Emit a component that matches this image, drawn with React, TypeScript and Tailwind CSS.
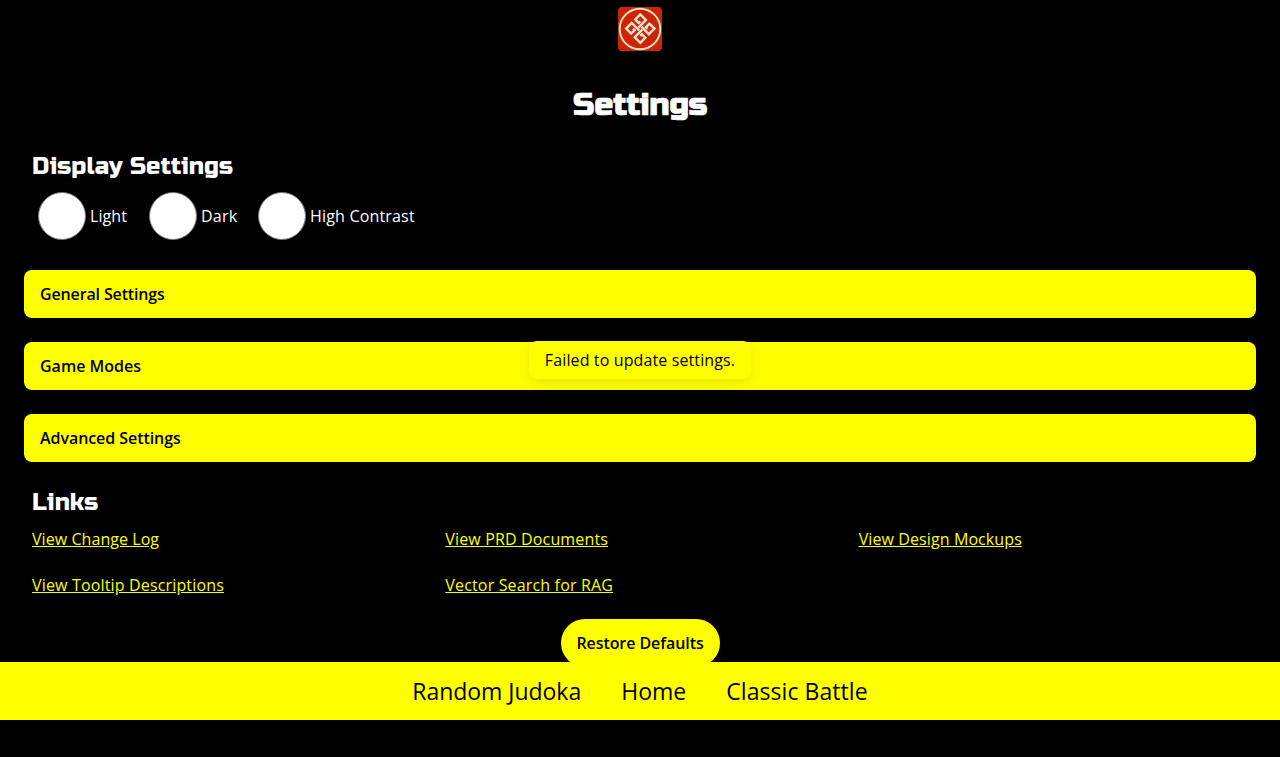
const loops = [0, 90, 180, 270];

function Logo() {
  return (
    <svg viewBox="0 0 44 44" className="size-11 rounded" aria-hidden="true">
      <rect width="44" height="44" fill="#cb2504" />
      <circle cx="22" cy="22" r="20.3" fill="none" stroke="#f5e3cf" strokeWidth="1.9" />
      <g transform="translate(22.3 21.6) rotate(45)" fill="none" stroke="#f5e3cf" strokeWidth="2.4">
        {loops.map((angle) => (
          <path key={angle} transform={`rotate(${angle})`} d="M-5.1 -5.1V-2.9H-10V-10H-2.1V0.6" />
        ))}
      </g>
    </svg>
  );
}

const modes = [
  { name: "Light", width: "w-[111px]", tracking: "tracking-[0.06px]" },
  { name: "Dark", width: "w-[109px]", tracking: "tracking-[0.25px]" },
  { name: "High Contrast", width: "w-[180px]", tracking: "tracking-[0.18px]" },
];
const sections = [
  { name: "General Settings", tracking: "tracking-[-0.14px]" },
  { name: "Game Modes", tracking: "tracking-normal" },
  { name: "Advanced Settings", tracking: "tracking-[-0.06px]" },
];
const links = [
  { name: "View Change Log", tracking: "tracking-[0.06px]" },
  { name: "View PRD Documents", tracking: "tracking-[0.15px]" },
  { name: "View Design Mockups", tracking: "tracking-[0.1px]" },
  { name: "View Tooltip Descriptions", tracking: "tracking-[0.16px]" },
  { name: "Vector Search for RAG", tracking: "tracking-[0.16px]" },
];
const heading = "font-['Russo_One','Inter',sans-serif] text-white font-normal";

export default function App() {
  return (
    <div className="relative flex h-[757px] flex-col overflow-hidden bg-black font-['Open_Sans',sans-serif] text-base text-white">
      <header className="flex h-[58px] shrink-0 justify-center pt-[7px]">
        <Logo />
      </header>
      <main className="flex h-[604px] shrink-0 flex-col overflow-hidden px-6">
        <h1 className={`${heading} mt-[23px] h-12 text-center text-[32px] leading-[48px] tracking-[-0.3px] [-webkit-text-stroke:0.7px_white]`}>Settings</h1>
        <section className="mt-5 px-2">
          <h2 className={`${heading} h-9 text-2xl leading-9 tracking-[0.1px]`}>Display Settings</h2>
          <div className="mt-[7px] flex h-12 pl-1.5">
            {modes.map((mode) => (
              <label key={mode.name} className={`flex items-center gap-1 ${mode.width} ${mode.tracking}`}>
                <input type="radio" name="display-mode" className="size-12 shrink-0 appearance-none rounded-full border border-[#767676] bg-white" />
                {mode.name}
              </label>
            ))}
          </div>
        </section>
        <div className="mt-[30px] flex flex-col gap-6">
          {sections.map((section) => (
            <button key={section.name} className={`h-12 rounded-lg bg-[#ffff00] px-4 text-left font-semibold text-black ${section.tracking}`}>{section.name}</button>
          ))}
        </div>
        <section className="mt-[23px] px-2">
          <h2 className={`${heading} h-9 text-2xl leading-9 tracking-[0.1px]`}>Links</h2>
          <nav className="mt-1.5 grid grid-cols-3 gap-x-6 gap-y-[22px] text-[#ffff00]">
            {links.map((link) => (
              <a key={link.name} href="#" className={`underline ${link.tracking}`}>{link.name}</a>
            ))}
          </nav>
        </section>
        <button className="mt-[22px] h-12 w-[159px] shrink-0 self-center rounded-[24px] bg-[#ffff00] font-semibold tracking-[-0.07px] text-black">Restore Defaults</button>
      </main>
      <footer className="flex h-[58px] shrink-0 items-center justify-center gap-10 bg-[#ffff00] text-[23.04px] text-black">
        <a href="#" className="tracking-[-0.05px]">Random Judoka</a>
        <a href="#">Home</a>
        <a href="#" className="tracking-[0.05px]">Classic Battle</a>
      </footer>
      <div role="status" className="absolute top-[341px] left-1/2 flex h-[38px] w-[222px] -translate-x-1/2 items-center justify-center rounded-lg bg-[#ffff00] tracking-[0.12px] whitespace-nowrap text-black shadow-[0_4px_12px_rgba(0,0,0,0.1)]">
        Failed to update settings.
      </div>
    </div>
  );
}
